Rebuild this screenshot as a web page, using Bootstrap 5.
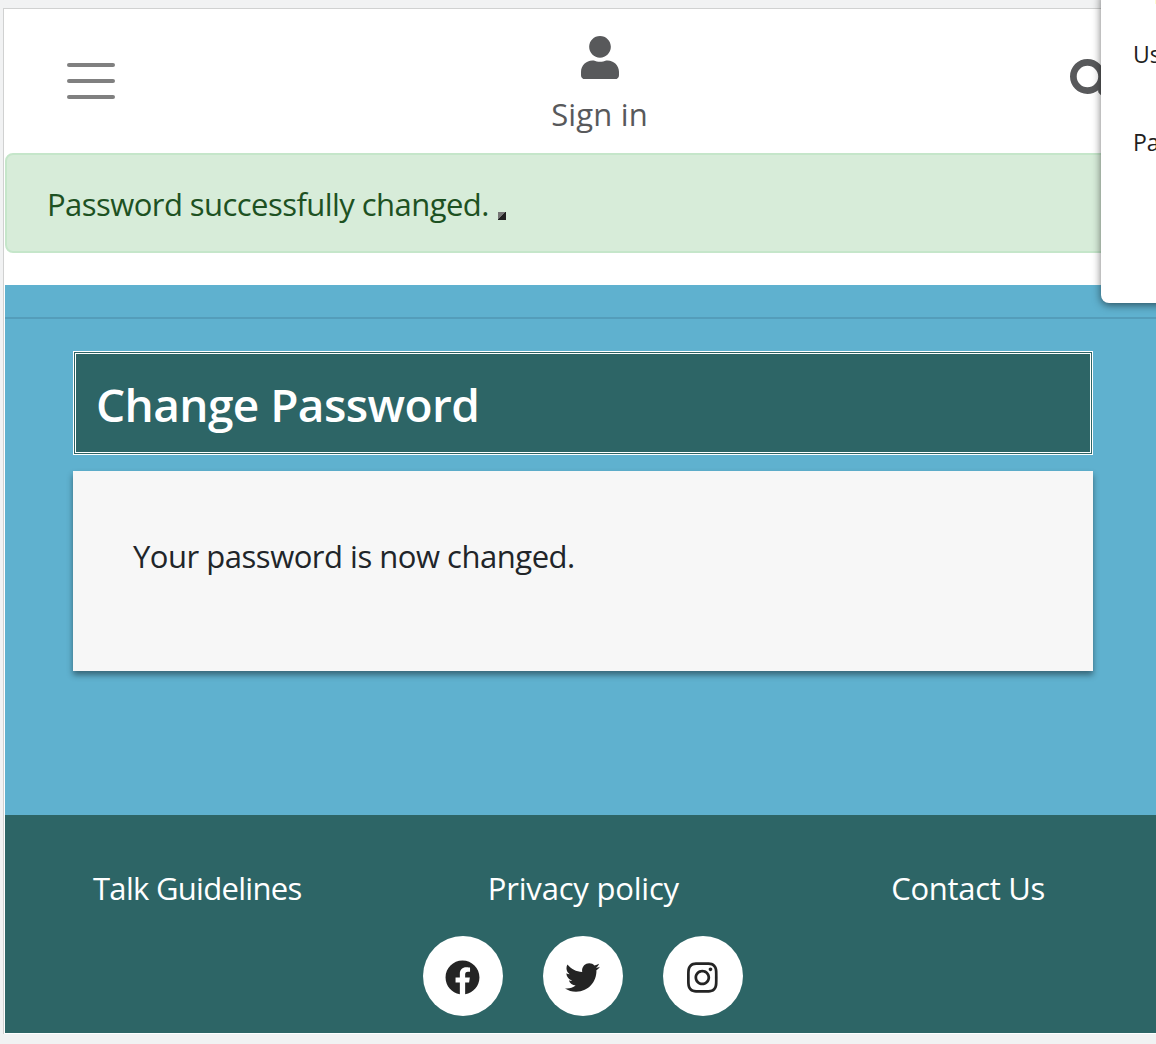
<!DOCTYPE html>
<html lang="en">
<head>
<meta charset="utf-8">
<meta name="viewport" content="width=device-width, initial-scale=1">
<title>Change Password</title>
<link href="https://cdn.jsdelivr.net/npm/bootstrap@5.3.0/dist/css/bootstrap.min.css" rel="stylesheet">
<style>
html, body { height: 1044px; overflow: hidden; }
body { background: #f1f2f3; padding: 8px 0 0 3px; font-family: "Open Sans", "Noto Sans", sans-serif; font-size: 31px; line-height: 48px; color: #212529; }
.page { width: 1170px; height: 1026px; background: #fff; border: 1px solid #d0d1d1; border-bottom: 0; padding-left: 1px; }
.page-inner { width: 1156px; height: 1024px; }
.page-inner a { color: inherit; text-decoration: none; }
.t { display: inline-block; white-space: nowrap; }
.site-top { height: 144px; padding: 26px 48px 0 62px; color: #58595b; }
.burger { width: 48px; height: 36px; margin-top: 28px; }
.burger i { height: 4px; border-radius: 2px; background: #808080; }
.sign { width: 120px; margin-left: 14px; }
.sign svg { width: 38px; height: 43.4px; margin-top: .5px; }
.sign .t { line-height: 44px; margin-top: 13.5px; letter-spacing: .15px; }
.search { width: 43px; height: 43px; margin-top: 24px; }
.notice { height: 100px; padding: 25px 40px; background: #d7ecd9; border: 2px solid #c5e6ca; border-radius: 8px; color: #1d5122; margin-bottom: 32px; }
.corner { width: 8px; height: 8px; background: linear-gradient(135deg, #777 50%, #202020 50%); margin: 32px 0 0 9px; }
.main-area { height: 530px; background: #5fb1cf; padding-top: 32px; }
.main-area hr { margin: 0 0 32px; border: 0; height: 2px; background: #549dba; opacity: 1; }
.content-col { width: 1020px; margin-left: 68px; }
.title-box { height: 104px; border: 3px double #fff; background: #2d6566; color: #fff; padding: 0 19px 0 20px; margin-bottom: 16px; }
.title-box h1 { font-size: 46px; font-weight: 600; line-height: 100px; margin: 0; }
.panel { height: 200px; background: #f7f7f7; box-shadow: 0 4px 6px rgba(0,0,0,.42); padding: 61px 60px; }
.site-foot { height: 218px; background: #2d6566; color: #fff; padding-top: 49px; }
.links { padding: 0 116px 0 88px; height: 72px; }
.round { width: 80px; height: 80px; background: #fff; color: #242424; padding: 3px 1px 0 0; }
.round svg { height: 35px; }
.login-pop { position: absolute; left: 1101px; top: -10px; width: 75px; height: 313px; border-radius: 8px; background: #fff; box-shadow: 0 2px 9px rgba(0,0,0,.55); padding: 40px 0 0 32px; font-size: 23px; color: #202020; }
.login-pop .t { height: 88px; }
.login-pop::before { content: ""; position: absolute; left: 54px; top: 0; width: 16px; height: 14px; background: #fffbd1; }
#t1 { letter-spacing: -.55px; }
#t2 { letter-spacing: -.48px; }
#t3 { letter-spacing: -.58px; }
#t4 { letter-spacing: -.7px; }
#t5 { letter-spacing: -.2px; margin-left: -26px; }
#t6 { letter-spacing: -.3px; }
</style>
<script src="https://cdn.jsdelivr.net/npm/bootstrap@5.3.0/dist/js/bootstrap.bundle.min.js"></script>
</head>
<body>
<div class="page">
 <div class="page-inner d-flex flex-column">
  <header class="site-top d-flex justify-content-between align-items-start">
   <div class="burger d-flex flex-column justify-content-between"><i></i><i></i><i></i></div>
   <a class="sign d-flex flex-column align-items-center" href="#">
    <svg viewBox="0 0 448 512" fill="currentColor"><path d="M224 256c70.7 0 128-57.3 128-128S294.7 0 224 0 96 57.3 96 128s57.3 128 128 128zm89.6 32h-16.7c-22.2 10.2-46.9 16-72.9 16s-50.6-5.8-72.9-16h-16.7C60.2 288 0 348.2 0 422.4V464c0 26.5 21.5 48 48 48h352c26.5 0 48-21.5 48-48v-41.6c0-74.2-60.2-134.4-134.4-134.4z"/></svg>
    <span class="t" id="t0">Sign in</span>
   </a>
   <svg class="search" viewBox="0 0 512 512" fill="currentColor"><path d="M505 442.7L405.3 343c-4.5-4.5-10.6-7-17-7H372c27.6-35.3 44-79.7 44-128C416 93.1 322.9 0 208 0S0 93.1 0 208s93.1 208 208 208c48.3 0 92.7-16.4 128-44v16.3c0 6.4 2.5 12.5 7 17l99.7 99.7c9.4 9.4 24.6 9.4 33.9 0l28.3-28.3c9.4-9.4 9.4-24.6.1-34zM208 336c-70.7 0-128-57.2-128-128 0-70.7 57.2-128 128-128 70.7 0 128 57.2 128 128 0 70.7-57.2 128-128 128z"/></svg>
  </header>
  <div class="notice d-flex" role="alert"><span class="t" id="t1">Password successfully changed.</span><span class="corner"></span></div>
  <main class="main-area">
   <hr>
   <div class="content-col">
    <div class="title-box"><h1><span class="t" id="t3">Change Password</span></h1></div>
    <div class="panel"><span class="t" id="t2">Your password is now changed.</span></div>
   </div>
  </main>
  <footer class="site-foot">
   <div class="links d-flex justify-content-between"><a class="t" id="t4" href="#">Talk Guidelines</a><a class="t" id="t5" href="#">Privacy policy</a><a class="t" id="t6" href="#">Contact Us</a></div>
   <div class="d-flex justify-content-center" style="gap:40px">
    <span class="round rounded-circle d-flex align-items-center justify-content-center"><svg viewBox="0 0 512 512" fill="currentColor"><path d="M504 256C504 119 393 8 256 8S8 119 8 256c0 123.78 90.69 226.38 209.25 245V327.69h-63V256h63v-54.64c0-62.15 37-96.48 93.67-96.48 27.14 0 55.52 4.84 55.52 4.84v61h-31.28c-30.8 0-40.41 19.12-40.41 38.73V256h68.78l-11 71.69h-57.78V501C413.31 482.38 504 379.78 504 256z"/></svg></span>
    <span class="round rounded-circle d-flex align-items-center justify-content-center"><svg viewBox="0 0 512 512" fill="currentColor"><path d="M459.37 151.716c.325 4.548.325 9.097.325 13.645 0 138.72-105.583 298.558-298.558 298.558-59.452 0-114.68-17.219-161.137-47.106 8.447.974 16.568 1.299 25.34 1.299 49.055 0 94.213-16.568 130.274-44.832-46.132-.975-84.792-31.188-98.112-72.772 6.498.974 12.995 1.624 19.818 1.624 9.421 0 18.843-1.3 27.614-3.573-48.081-9.747-84.143-51.98-84.143-102.985v-1.299c13.969 7.797 30.214 12.67 47.431 13.319-28.264-18.843-46.781-51.005-46.781-87.391 0-19.492 5.197-37.36 14.294-52.954 51.655 63.675 129.3 105.258 216.365 109.807-1.624-7.797-2.599-15.918-2.599-24.04 0-57.828 46.782-104.934 104.934-104.934 30.213 0 57.502 12.67 76.67 33.137 23.715-4.548 46.456-13.32 66.599-25.34-7.798 24.366-24.366 44.833-46.132 57.827 21.117-2.273 41.584-8.122 60.426-16.243-14.292 20.791-32.161 39.308-52.628 54.253z"/></svg></span>
    <span class="round rounded-circle d-flex align-items-center justify-content-center"><svg viewBox="0 0 448 512" fill="currentColor"><path d="M224.1 141c-63.6 0-114.9 51.3-114.9 114.9s51.3 114.9 114.9 114.9S339 319.5 339 255.9 287.7 141 224.1 141zm0 189.6c-41.1 0-74.7-33.5-74.7-74.7s33.5-74.7 74.7-74.7 74.7 33.5 74.7 74.7-33.6 74.7-74.7 74.7zm146.4-194.3c0 14.9-12 26.8-26.8 26.8-14.9 0-26.8-12-26.8-26.8s12-26.8 26.8-26.8 26.8 12 26.8 26.8zm76.1 27.2c-1.7-35.9-9.9-67.7-36.2-93.9-26.2-26.2-58-34.4-93.9-36.2-37-2.1-147.9-2.1-184.9 0-35.8 1.7-67.6 9.9-93.9 36.1s-34.4 58-36.2 93.9c-2.1 37-2.1 147.9 0 184.9 1.7 35.9 9.9 67.7 36.2 93.9s58 34.4 93.9 36.2c37 2.1 147.9 2.1 184.9 0 35.9-1.7 67.7-9.9 93.9-36.2 26.2-26.2 34.4-58 36.2-93.9 2.1-37 2.1-147.8 0-184.8zM398.8 388c-7.8 19.6-22.9 34.7-42.6 42.6-29.5 11.7-99.5 9-132.1 9s-102.7 2.6-132.1-9c-19.6-7.8-34.7-22.9-42.6-42.6-11.7-29.5-9-99.5-9-132.1s-2.6-102.7 9-132.1c7.8-19.6 22.9-34.7 42.6-42.6 29.5-11.7 99.5-9 132.1-9s102.7-2.6 132.1 9c19.6 7.8 34.7 22.9 42.6 42.6 11.7 29.5 9 99.5 9 132.1s2.7 102.7-9 132.1z"/></svg></span>
   </div>
  </footer>
 </div>
</div>
<div class="login-pop d-flex flex-column"><span class="t">Us</span><span class="t">Pa</span></div>
</body>
</html>
